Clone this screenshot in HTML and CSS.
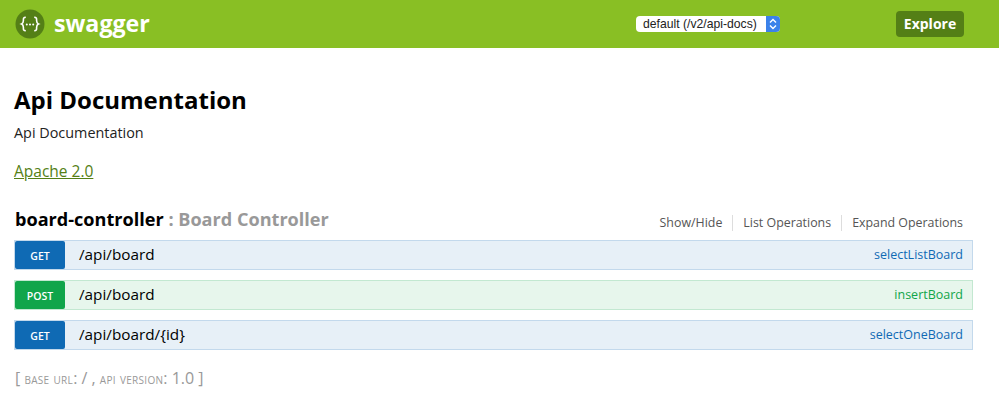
FILE: index.html
```html
<!DOCTYPE html>
<html lang="en">
<head>
<meta charset="utf-8">
<title>Api Documentation</title>
<link rel="stylesheet" href="styles.css">
</head>
<body>
<header class="topbar">
  <a class="brand">
    <svg class="logo" viewBox="0 0 30 30" width="30" height="30" aria-hidden="true">
      <circle cx="15" cy="15" r="14.5" fill="#547f16"/>
      <path d="M10.8 8.2c-2.8 0-2.4 1.8-2.4 3.4 0 1.9-.5 2.9-1.8 3.4 1.3.5 1.8 1.5 1.8 3.4 0 1.6-.4 3.4 2.4 3.4M19.2 8.2c2.8 0 2.4 1.8 2.4 3.4 0 1.9.5 2.9 1.8 3.4-1.3.5-1.8 1.5-1.8 3.4 0 1.6.4 3.4-2.4 3.4" fill="none" stroke="#fff" stroke-width="1.6"/>
      <circle cx="11.8" cy="15.4" r="1" fill="#fff"/><circle cx="15" cy="15.4" r="1" fill="#fff"/><circle cx="18.2" cy="15.4" r="1" fill="#fff"/>
    </svg>
    <span class="brand-name">swagger</span>
  </a>
  <div class="select">
    <span class="select-label">default (/v2/api-docs)</span>
    <span class="select-arrows">
      <svg viewBox="0 0 14 16" width="14" height="16" aria-hidden="true"><path d="M4 6.5 7 3.5l3 3M4 9.5l3 3 3-3" fill="none" stroke="#fff" stroke-width="1.4"/></svg>
    </span>
  </div>
  <a class="explore">Explore</a>
</header>
<main class="content">
  <h1 class="title">Api Documentation</h1>
  <p class="desc">Api Documentation</p>
  <p class="license"><a>Apache 2.0</a></p>
  <section class="resource">
    <div class="resource-head">
      <h2 class="resource-title"><span class="res-name">board-controller</span><span class="res-sub"> : Board Controller</span></h2>
      <ul class="res-actions">
        <li>Show/Hide</li>
        <li>List Operations</li>
        <li>Expand Operations</li>
      </ul>
    </div>
    <div class="op op-get"><span class="verb">GET</span><span class="path">/api/board</span><span class="nick">selectListBoard</span></div>
    <div class="op op-post"><span class="verb">POST</span><span class="path">/api/board</span><span class="nick">insertBoard</span></div>
    <div class="op op-get"><span class="verb">GET</span><span class="path">/api/board/{id}</span><span class="nick">selectOneBoard</span></div>
  </section>
  <p class="base">[ <span class="sc">base url</span>: / , <span class="sc">api version</span>: 1.0 ]</p>
</main>
</body>
</html>
```
FILE: styles.css
```css
* { box-sizing: border-box; }
html, body { margin: 0; padding: 0; }
body { font-family: "Open Sans", sans-serif; background: #fff; color: #000; overflow: hidden; }

.topbar {
  height: 48px;
  background: #89bf24;
  display: flex;
  align-items: center;
  padding-left: 15px;
  position: relative;
}
.brand { display: flex; align-items: center; gap: 9px; width: 621px; }
.logo { display: block; }
.brand-name { font-size: 23.2px; font-weight: 700; color: #fff; line-height: 30px; position: relative; top: -1px; }

.select {
  width: 144px;
  height: 16px;
  background: #fff;
  border-radius: 4px;
  display: flex;
  justify-content: space-between;
  align-items: center;
  overflow: hidden;
  font-family: "Liberation Sans", sans-serif;
  font-size: 12.2px;
  color: #222;
  padding-left: 7px;
}
.select-arrows {
  width: 14px;
  height: 16px;
  background: #3b82ea;
  display: block;
}
.select-arrows svg { display: block; }

.explore {
  margin-left: 116px;
  width: 68px;
  height: 26px;
  background: #547f16;
  border-radius: 4px;
  color: #fff;
  font-size: 14px;
  font-weight: 700;
  line-height: 26px;
  text-align: center;
}

.content { padding: 0 26px 0 14px; }
.title { margin: 36px 0 0; font-size: 24px; line-height: 32px; font-weight: 700; }
.desc { margin: 7px 0 0; font-size: 14.4px; line-height: 19px; color: #222; }
.license { margin: 19px 0 0; font-size: 15.5px; line-height: 20px; }
.license a { color: #547f16; text-decoration: underline; }

.resource { margin: 0; padding-top: 26px; }
.resource-head { display: flex; justify-content: space-between; align-items: center; height: 24px; margin-bottom: 9px; padding-left: 1px; }
.resource-title { margin: 0; font-size: 18.1px; line-height: 24px; font-weight: 700; }
.res-sub { color: #999; }
.res-actions { list-style: none; margin: 0; padding: 0; display: flex; font-size: 12.4px; color: #555; padding-right: 10px; line-height: 16px; position: relative; top: 4px; }
.res-actions li { padding: 0 10px; border-right: 1px solid #ddd; }
.res-actions li:last-child { padding-right: 0; border-right: 0; }

.op {
  height: 30px;
  margin-bottom: 10px;
  border: 1px solid;
  display: flex;
  align-items: center;
}
.op-get { background: #e7f0f7; border-color: #c3d9ec; color: #0f6ab4; }
.op-post { background: #e7f6ec; border-color: #c3e8d1; color: #10a54a; }
.verb {
  width: 50px;
  height: 28px;
  border-radius: 2px;
  color: #fff;
  font-size: 10.5px;
  font-weight: 600;
  line-height: 30px;
  text-align: center;
}
.op-get .verb { background: #0f6ab4; }
.op-post .verb { background: #10a54a; }
.path { margin-left: 14px; padding-bottom: 2px; font-size: 15.3px; color: #000; }
.nick { margin-left: auto; padding: 0 9px 2px 0; font-size: 12.5px; }

.base { margin: 18px 0 0; font-size: 16px; line-height: 20px; color: #999; padding-left: 1px; }
.sc { font-variant: small-caps; font-size: 14.7px; letter-spacing: 0.3px; }
```
